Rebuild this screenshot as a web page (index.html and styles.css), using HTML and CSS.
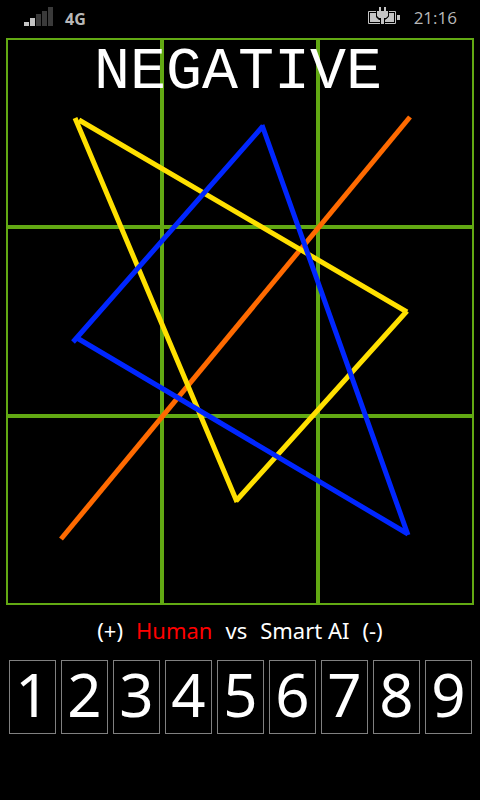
FILE: index.html
```html
<!DOCTYPE html>
<html lang="en">
<head>
<meta charset="utf-8">
<meta name="viewport" content="width=device-width, initial-scale=1">
<title>Negative</title>
<link rel="stylesheet" href="styles.css">
</head>
<body>
<header class="status">
  <svg class="signal" width="30" height="20" viewBox="0 0 30 20" role="img" aria-label="Signal">
    <path fill="#c4c4c4" d="M0 15h5v4H0zM6 11h5v8H6z"/>
    <path fill="#3a3a3a" d="M12 7h5v12h-5zM18 4h5v15h-5zM24 0h5v19h-5z"/>
  </svg>
  <span class="network">4G</span>
  <svg class="battery" width="32" height="18" viewBox="0 0 32 18" role="img" aria-label="Battery charging">
    <path fill="none" stroke="#c4c4c4" d="M9 4.500H.5v12h27v-12H20"/>
    <path fill="#c4c4c4" d="M2 6h6v4l3 3h1v2H2zM26 6h-6v4l-3 3h-1v2h10zM29 8h3v5h-3z"/>
    <path fill="#c4c4c4" stroke="#000" stroke-width="2" paint-order="stroke" d="M11 0h2v4h3V0h2v4h2v5l-2 2h-2v6h-3v-6h-2L9 9V4h2z"/>
  </svg>
  <time class="clock">21:16</time>
</header>
<main>
  <section class="board">
    <div class="cell"></div><div class="cell"></div><div class="cell"></div>
    <div class="cell"></div><div class="cell"></div><div class="cell"></div>
    <div class="cell"></div><div class="cell"></div><div class="cell"></div>
    <svg class="lines" viewBox="6 38 468 567" preserveAspectRatio="none" fill="none" stroke-width="5" aria-hidden="true">
      <path stroke="#ff6a00" d="M61 539L410 117"/>
      <path stroke="#ffe000" d="M79 120L407 312M407 311L236 501M237 502L75 118"/>
      <path stroke="#0026ff" d="M73 342L263 126M262 125L408 535M408 534L77 338"/>
    </svg>
    <h1 class="title">NEGATIVE</h1>
  </section>
  <p class="players"><span>(+)</span><span class="active">Human</span><span>vs</span><span>Smart AI</span><span>(-)</span></p>
  <div class="numbers">
    <button type="button">1</button>
    <button type="button">2</button>
    <button type="button">3</button>
    <button type="button">4</button>
    <button type="button">5</button>
    <button type="button">6</button>
    <button type="button">7</button>
    <button type="button">8</button>
    <button type="button">9</button>
  </div>
</main>
</body>
</html>
```
FILE: styles.css
```css
* { box-sizing: border-box; }
body {
  margin: 0;
  min-height: 100vh;
  background: #000;
  color: #fff;
  font-family: "Noto Sans", "Open Sans", sans-serif;
}
.status {
  display: flex;
  align-items: flex-start;
  height: 38px;
  padding: 7px 23px 0 24px;
  color: #b8b8b8;
}
.network {
  margin: 0 auto 0 11px;
  font-size: 16px;
  font-weight: 700;
  line-height: 24px;
}
.clock {
  margin-left: 14px;
  font-family: "Open Sans", sans-serif;
  font-size: 17px;
  line-height: 21px;
}
.board {
  position: relative;
  display: grid;
  grid-template-columns: repeat(3, 1fr);
  margin: 0 6px;
}
.cell {
  aspect-ratio: 156 / 189;
  border: 2px solid #62a913;
}
.lines {
  position: absolute;
  inset: 0;
  width: 100%;
  height: 100%;
}
.title {
  position: absolute;
  top: 0;
  left: 0;
  right: 0;
  margin: 0;
  padding: 2px 4px 0 0;
  font-family: "Liberation Mono", monospace;
  font-size: 60px;
  font-weight: 400;
  line-height: 64px;
  text-align: center;
}
.players {
  display: flex;
  justify-content: center;
  gap: 13px;
  margin: 0;
  padding: 8px 0 12px;
  font-size: 22px;
  line-height: 35px;
}
.active { color: #f00; }
.numbers {
  display: grid;
  grid-template-columns: repeat(9, 1fr);
  gap: 5px;
  padding: 0 8px 0 9px;
}
.numbers button {
  height: 74px;
  padding: 0 0 6px;
  border: 1px solid #808080;
  border-radius: 0;
  background: #000;
  color: #fff;
  font-family: inherit;
  font-size: 60px;
  line-height: 64px;
}
```
